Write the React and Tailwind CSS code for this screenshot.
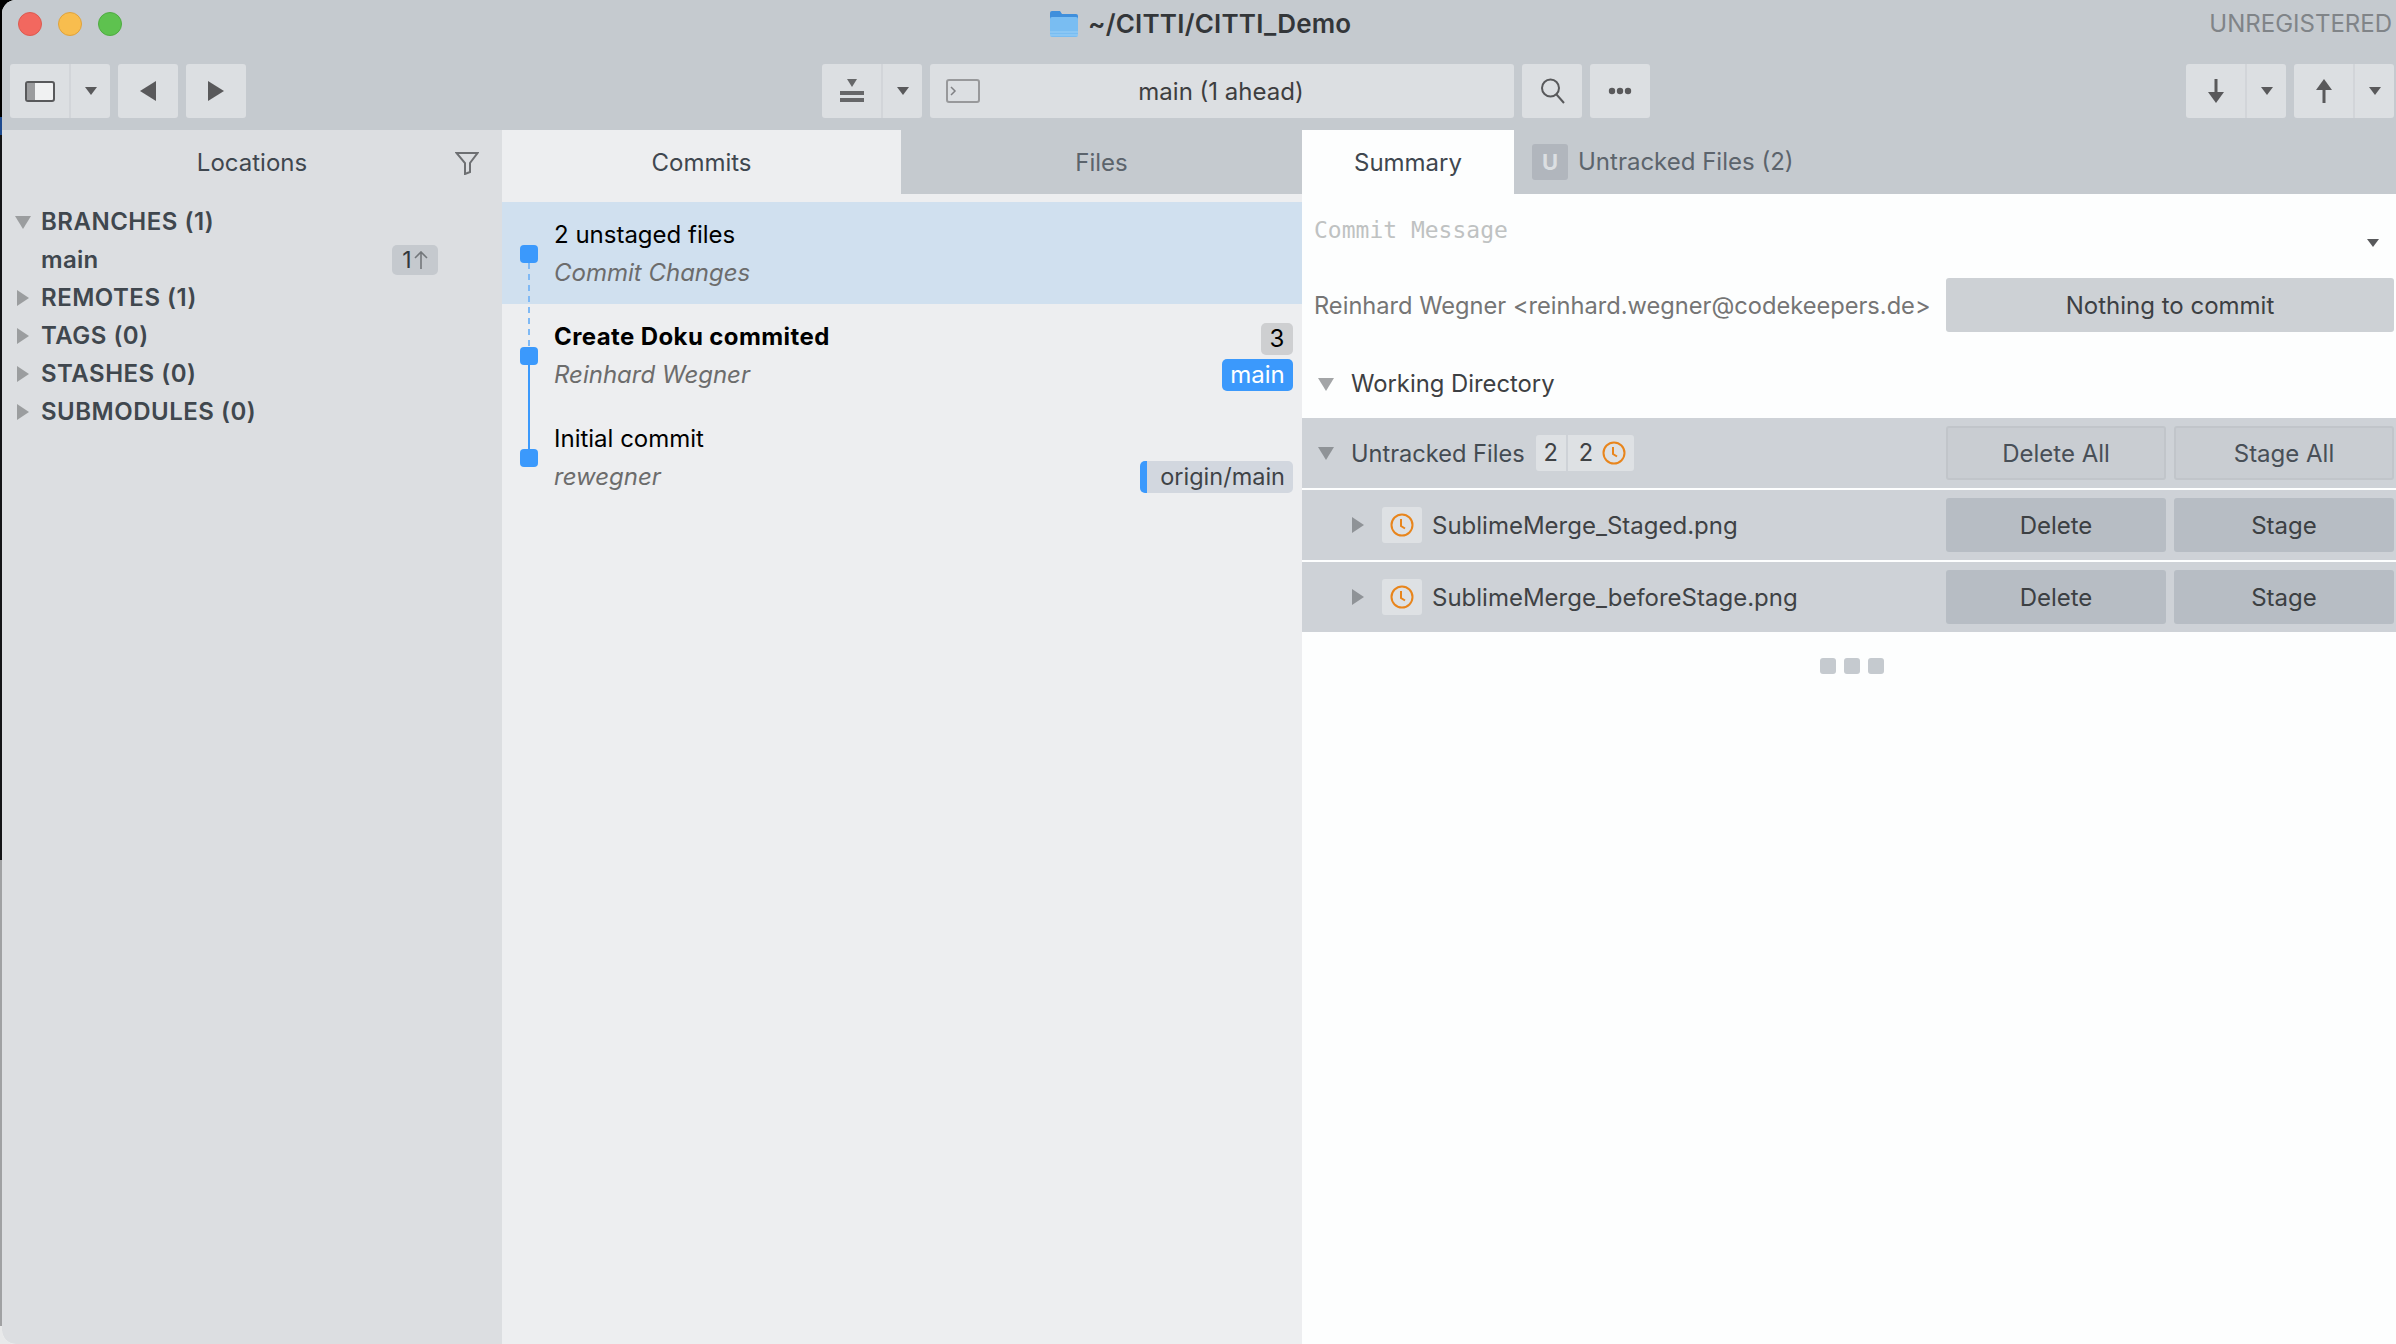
const ui = { fontFamily: "Inter, sans-serif" };

const Tri = ({ dir = "right", className = "" }) => (
  <svg width="16" height="16" viewBox="0 0 16 16" className={`shrink-0 ${className}`}>
    {dir === "down" ? <path d="M0 2h16L8 15z" fill="currentColor" /> : <path d="M2 0l12 8-12 8z" fill="currentColor" />}
  </svg>
);

const Caret = () => (
  <svg width="12" height="10" viewBox="0 0 12 10"><path d="M0 1h12L6 9z" fill="#59595b" /></svg>
);

const Clock = () => (
  <svg width="24" height="24" viewBox="0 0 24 24" fill="none" stroke="#e8851c" strokeWidth="2">
    <circle cx="12" cy="12" r="10.5" />
    <path d="M11 6v7l4 2.5" />
  </svg>
);

const ToolBtn = ({ className = "", children }) => (
  <div className={`h-[54px] bg-[#dcdfe2] rounded-[3px] flex items-center justify-center ${className}`}>{children}</div>
);

const SplitBtn = ({ width, left, children }) => (
  <div className={`h-[54px] bg-[#dcdfe2] rounded-[3px] flex ${width}`}>
    <div className={`flex items-center justify-center border-r-2 border-[#d2d5d9] ${left}`}>{children}</div>
    <div className="flex-1 flex items-center justify-center"><Caret /></div>
  </div>
);

const SideRow = ({ label, open }) => (
  <div className="h-[38px] flex items-center pl-[13px] text-[24px] font-semibold tracking-[0.5px] text-[#40474e]">
    <Tri dir={open ? "down" : "right"} className="text-[#9b9d9f]" />
    <span className="ml-[10px]">{label}</span>
  </div>
);

const CommitRow = ({ title, author, bold, selected, children }) => (
  <div className={`h-[102px] pl-[52px] pr-[9px] flex justify-between ${selected ? "bg-[#d0e0ef]" : ""}`}>
    <div className="pt-[17px]">
      <div className={`h-[32px] leading-[32px] text-[24px] text-black ${bold ? "font-bold tracking-[0.4px]" : ""}`}>{title}</div>
      <div className="mt-[6px] h-[32px] leading-[32px] text-[24px] italic text-[#6c6c6c]">{author}</div>
    </div>
    <div className="flex flex-col items-end justify-end gap-1 pb-[15px]">{children}</div>
  </div>
);

const ActionBtn = ({ outline, children }) => (
  <div className={`w-[220px] h-[54px] pt-[2px] rounded-[3px] flex items-center justify-center text-[24px] ${outline ? "border-2 border-[#c1c5ca] bg-[#c9cdd2] text-[#484f57]" : "bg-[#b7bdc4] text-[#3c4043]"}`}>
    {children}
  </div>
);

const FileRow = ({ name }) => (
  <div className="h-[70px] bg-[#ced2d7] flex items-center pl-[48px] pr-[2px]">
    <Tri className="text-[#8f9397]" />
    <div className="ml-[16px] w-[40px] h-[36px] bg-[#dee1e4] rounded-[3px] flex items-center justify-center"><Clock /></div>
    <span className="ml-[10px] pt-[2px] text-[24px] text-[#3f4245]">{name}</span>
    <div className="ml-auto flex gap-2">
      <ActionBtn>Delete</ActionBtn>
      <ActionBtn>Stage</ActionBtn>
    </div>
  </div>
);

export default function App() {
  return (
    <div
      className="w-[2396px] h-[1344px] bg-[linear-gradient(to_bottom,#000_117px,#1d4a8f_117px,#1d4a8f_135px,#141416_135px,#141416_860px,#a0a1a3_860px,#a0a1a3_1326px,#e8e9ea_1326px)] pl-[2px] overflow-hidden"
      style={ui}
    >
      <div className="h-full bg-[#fdfefe] rounded-tl-[14px] rounded-bl-[14px] overflow-hidden flex flex-col">
        {/* title bar */}
        <div className="h-[130px] shrink-0 bg-[#c5cacf]">
          <div className="h-[48px] flex items-center relative">
            <div className="flex gap-4 pl-[16px]">
              <span className="w-6 h-6 rounded-full bg-[#f2685f] border border-[#dc5a50]" />
              <span className="w-6 h-6 rounded-full bg-[#f8bd4e] border border-[#dfa23c]" />
              <span className="w-6 h-6 rounded-full bg-[#5ec24f] border border-[#4fab42]" />
            </div>
            <div className="ml-[927px] flex items-center gap-[9px]">
              <svg width="30" height="28" viewBox="0 0 30 28">
                <path d="M1 3a2 2 0 012-2h8l2 3h14a2 2 0 012 2v4H1z" fill="#3f8fdc" />
                <rect x="1" y="7" width="28" height="20" rx="2" fill="#79bdf2" />
                <path d="M1 22h28M1 25h28" stroke="#9dd0f6" />
              </svg>
              <span className="pb-[2px] text-[26px] font-semibold text-[#333639] tracking-[0.2px]">~/CITTI/CITTI_Demo</span>
            </div>
            <span className="ml-auto pr-[4px] text-[24px] text-[#808488]">UNREGISTERED</span>
          </div>
          <div className="h-[54px] mt-[16px] flex items-center pl-[8px] pr-[2px]">
            <SplitBtn width="w-[100px]" left="w-[61px]">
              <svg width="32" height="24" viewBox="0 0 32 24">
                <rect x="2" y="3" width="28" height="19" rx="2" fill="#f0f1f2" stroke="#58595b" strokeWidth="2" />
                <rect x="3" y="4" width="8" height="17" fill="#9b9c9e" />
              </svg>
            </SplitBtn>
            <ToolBtn className="w-[60px] ml-[8px]">
              <svg width="16" height="20" viewBox="0 0 16 20"><path d="M16 0v20L0 10z" fill="#59595b" /></svg>
            </ToolBtn>
            <ToolBtn className="w-[60px] ml-[8px]">
              <svg width="16" height="20" viewBox="0 0 16 20"><path d="M0 0v20l16-10z" fill="#59595b" /></svg>
            </ToolBtn>
            <div className="ml-[576px]">
              <SplitBtn width="w-[100px]" left="w-[61px]">
                <svg width="24" height="24" viewBox="0 0 24 24" fill="#666769">
                  <path d="M7 0h10l-5 8z" />
                  <rect x="0" y="12" width="24" height="4" />
                  <rect x="0" y="19" width="24" height="4" />
                </svg>
              </SplitBtn>
            </div>
            <ToolBtn className="w-[584px] ml-[8px] relative pt-[2px]">
              <svg width="34" height="24" viewBox="0 0 34 24" fill="none" className="absolute left-[16px] top-[15px]">
                <rect x="1" y="1" width="32" height="22" rx="2" stroke="#98999b" strokeWidth="2" />
                <path d="M5 8l4 4-4 4" stroke="#808184" strokeWidth="1.5" />
              </svg>
              <span className="text-[24px] text-[#3d3e40] -ml-[2px]">main (1 ahead)</span>
            </ToolBtn>
            <ToolBtn className="w-[60px] ml-[8px] pl-[2px]">
              <svg width="26" height="26" viewBox="0 0 26 26" fill="none" stroke="#58595b" strokeWidth="2">
                <circle cx="10.5" cy="10" r="8.5" />
                <path d="M16.5 16.5L24 25" />
              </svg>
            </ToolBtn>
            <ToolBtn className="w-[60px] ml-[8px]">
              <svg width="24" height="8" viewBox="0 0 24 8" fill="#59595b">
                <circle cx="4" cy="4" r="3.2" /><circle cx="12" cy="4" r="3.2" /><circle cx="20" cy="4" r="3.2" />
              </svg>
            </ToolBtn>
            <div className="ml-auto flex gap-2">
              <SplitBtn width="w-[100px]" left="w-[61px]">
                <svg width="16" height="24" viewBox="0 0 16 24" fill="#59595b"><path d="M6.5 0h3v14h-3z" /><path d="M0 13h16l-8 11z" /></svg>
              </SplitBtn>
              <SplitBtn width="w-[100px]" left="w-[61px]">
                <svg width="16" height="24" viewBox="0 0 16 24" fill="#59595b"><path d="M6.5 10h3v14h-3z" /><path d="M0 11h16L8 0z" /></svg>
              </SplitBtn>
            </div>
          </div>
        </div>

        <div className="flex-1 flex min-h-0">
          {/* sidebar */}
          <div className="w-[500px] shrink-0 bg-[#dcdee1]">
            <div className="h-[64px] pt-[2px] relative flex items-center justify-center text-[24px] text-[#3f474f]">
              Locations
              <svg width="24" height="24" viewBox="0 0 24 24" fill="none" stroke="#6d6f72" strokeWidth="2" className="absolute right-[23px] top-[21px]">
                <path d="M1.5 2h21L15 12v9l-5 2V12z" />
              </svg>
            </div>
            <div className="pt-[9px]">
              <SideRow label="BRANCHES (1)" open />
              <div className="h-[38px] flex items-center pl-[39px] pr-[64px] justify-between">
                <span className="text-[24px] font-semibold tracking-[0.3px] text-[#40474e]">main</span>
                <span className="w-[46px] h-[30px] bg-[#c5c9ce] rounded-[5px] flex items-center justify-center gap-[2px] text-[23px] text-[#33373b]">
                  1
                  <svg width="14" height="18" viewBox="0 0 14 18" fill="none" stroke="#73777b" strokeWidth="1.6"><path d="M7 18V1M1 7l6-6 6 6" /></svg>
                </span>
              </div>
              <SideRow label="REMOTES (1)" />
              <SideRow label="TAGS (0)" />
              <SideRow label="STASHES (0)" />
              <SideRow label="SUBMODULES (0)" />
            </div>
          </div>

          {/* commits */}
          <div className="w-[800px] shrink-0 bg-[#edeef0] flex flex-col">
            <div className="h-[64px] flex shrink-0 text-[24px]">
              <div className="w-[399px] pt-[2px] flex items-center justify-center text-[#3f474f]">Commits</div>
              <div className="flex-1 pt-[2px] flex items-center justify-center bg-[#c5cacf] text-[#5c646c]">Files</div>
            </div>
            <div className="pt-[8px] relative">
              <CommitRow title="2 unstaged files" author="Commit Changes" selected />
              <CommitRow title="Create Doku commited" author="Reinhard Wegner" bold>
                <span className="w-[32px] h-[32px] rounded-[5px] bg-[#cecfd1] flex items-center justify-center text-[24px] text-black">3</span>
                <span className="w-[71px] h-[32px] rounded-[5px] bg-[#3b99fc] flex items-center justify-center text-[24px] text-white">main</span>
              </CommitRow>
              <CommitRow title="Initial commit" author="rewegner">
                <span className="w-[153px] h-[32px] rounded-[5px] bg-[#d2d7df] border-l-[7px] border-[#3b99fc] flex items-center justify-end pr-[8px] text-[23.5px] text-[#3f4347]">origin/main</span>
              </CommitRow>
              <svg width="18" height="240" viewBox="0 0 18 240" className="absolute left-[18px] top-[51px]">
                <path d="M9 18v84" stroke="#7fb9f5" strokeWidth="2" strokeDasharray="6 5" />
                <path d="M9 120v84" stroke="#3b99fc" strokeWidth="2" />
                <rect y="0" width="18" height="18" rx="4" fill="#3b99fc" />
                <rect y="102" width="18" height="18" rx="4" fill="#3b99fc" />
                <rect y="204" width="18" height="18" rx="4" fill="#3b99fc" />
              </svg>
            </div>
          </div>

          {/* summary */}
          <div className="flex-1 min-w-0 bg-[#fdfefe] flex flex-col">
            <div className="h-[64px] shrink-0 flex bg-[#c5cacf] text-[24px]">
              <div className="w-[212px] pt-[2px] bg-[#fdfefe] flex items-center justify-center text-[#3f474f]">Summary</div>
              <div className="flex items-center pl-[18px] gap-[10px] text-[#5c646c]">
                <span className="w-[36px] h-[36px] bg-[#b1b6bd] rounded-[3px] flex items-center justify-center text-[22px] font-bold text-[#dcdfe2]">U</span>
                Untracked Files (2)
              </div>
            </div>
            <div className="h-[84px] shrink-0 flex items-start justify-between pl-[12px] pr-[17px] pt-[20px]">
              <span className="text-[23px] leading-[32px] text-[#bfc2c2]" style={{ fontFamily: '"DejaVu Sans Mono", monospace' }}>Commit Message</span>
              <svg width="12" height="10" viewBox="0 0 12 10" className="mt-[24px]"><path d="M0 1h12L6 9z" fill="#58595b" /></svg>
            </div>
            <div className="h-[54px] shrink-0 flex items-center justify-between pl-[12px] pr-[2px]">
              <span className="pt-[2px] text-[23.65px] text-[#757575]">Reinhard Wegner &lt;reinhard.wegner@codekeepers.de&gt;</span>
              <div className="w-[448px] h-[54px] pt-[2px] rounded-[3px] bg-[#cdd1d5] flex items-center justify-center text-[24px] text-[#3c4043]">Nothing to commit</div>
            </div>
            <div className="h-[86px] shrink-0 flex items-center pl-[16px] pt-[18px] text-[23.8px] text-[#3d4043]">
              <Tri dir="down" className="text-[#a3a5a7]" />
              <span className="ml-[17px]">Working Directory</span>
            </div>
            <div className="flex flex-col gap-[2px]">
              <div className="h-[70px] bg-[#ced2d7] flex items-center pl-[16px] pr-[2px] text-[23.6px] text-[#444b52]">
                <Tri dir="down" className="text-[#8f9397]" />
                <span className="ml-[17px] pt-[1px]">Untracked Files</span>
                <div className="ml-[11px] h-[36px] w-[98px] bg-[#dee1e4] rounded-[3px] flex items-center text-[#3f4245]">
                  <span className="w-[32px] h-full flex items-center justify-center border-r-2 border-[#ced2d7]">2</span>
                  <span className="ml-[11px]">2</span>
                  <span className="ml-[9px] flex"><Clock /></span>
                </div>
                <div className="ml-auto flex gap-2">
                  <ActionBtn outline>Delete All</ActionBtn>
                  <ActionBtn outline>Stage All</ActionBtn>
                </div>
              </div>
              <FileRow name="SublimeMerge_Staged.png" />
              <FileRow name="SublimeMerge_beforeStage.png" />
            </div>
            <div className="pt-[26px] flex justify-center gap-2 pl-[6px]">
              <span className="w-4 h-4 rounded-[3px] bg-[#c5cacf]" />
              <span className="w-4 h-4 rounded-[3px] bg-[#c5cacf]" />
              <span className="w-4 h-4 rounded-[3px] bg-[#c5cacf]" />
            </div>
          </div>
        </div>
      </div>
    </div>
  );
}
